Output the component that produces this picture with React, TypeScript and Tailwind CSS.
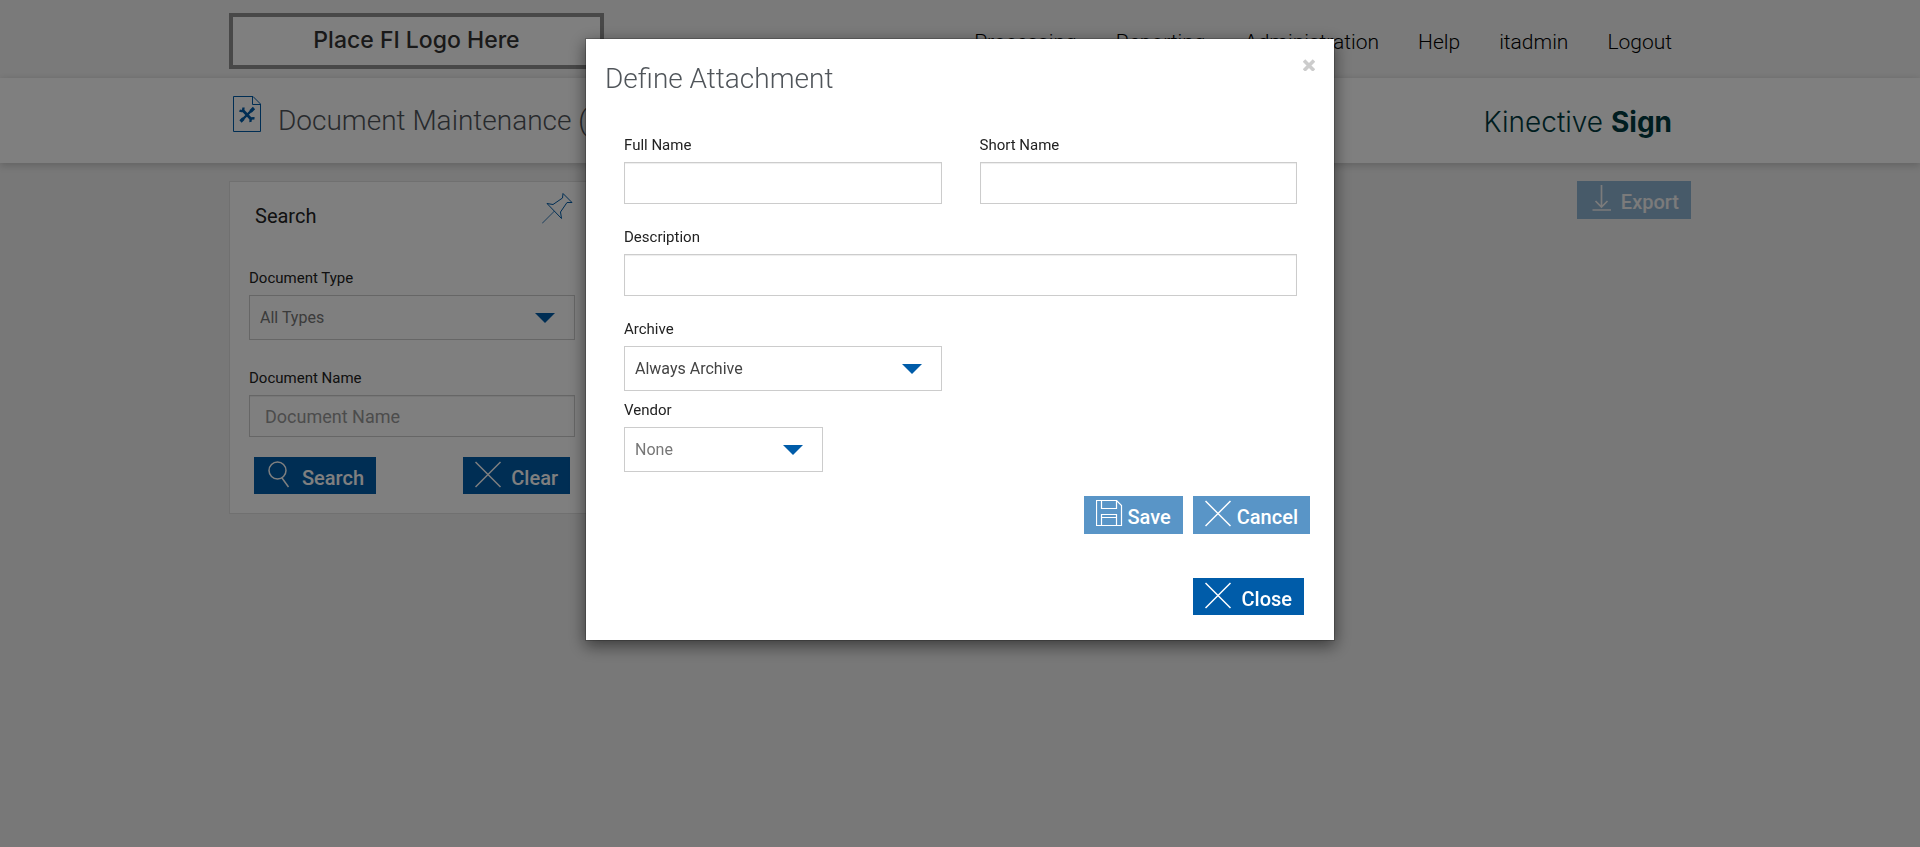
import type { ReactNode } from 'react';

const navItems = ['Processing', 'Reporting', 'Administration', 'Help', 'itadmin', 'Logout'];

function CrossIcon() {
  return (
    <svg className="h-7 w-7 shrink-0" viewBox="0 0 28 28" fill="none" stroke="currentColor" strokeWidth="1.5">
      <path d="M.5 1 25.5 26M25.5 1 .5 26" />
    </svg>
  );
}

function SearchIcon() {
  return (
    <svg className="h-7 w-7 shrink-0" viewBox="0 0 28 28" fill="none" stroke="currentColor" strokeWidth="1.5">
      <circle cx="11.5" cy="9.5" r="8.5" />
      <path d="M16 17 22.5 26" />
    </svg>
  );
}

function SaveIcon() {
  return (
    <svg className="h-7 w-7 shrink-0" viewBox="0 0 28 28" fill="none" stroke="currentColor" strokeWidth="1.2">
      <path d="M.5 .5H20.5L25.5 5.5V25.5H.5Z" />
      <path d="M5.5 .5V8.5H20.5V.5M5.5 25.5V14.5H20.5V25.5M5.5 17.5H20.5" />
    </svg>
  );
}

function ExportIcon() {
  return (
    <svg className="h-7 w-7 shrink-0" viewBox="0 0 28 28" fill="none" stroke="currentColor" strokeWidth="1.7">
      <path d="M12.5 0V22M6.5 16 12.5 22 18.5 16M3.5 25H22" />
    </svg>
  );
}

function DocumentToolsIcon() {
  return (
    <svg className="h-9 w-7 shrink-0" viewBox="0 0 28 36" fill="none" stroke="#005ca9">
      <path d="M.5.5H20L27.5 8V35.5H.5Z" />
      <path d="M19.5 .5V8.5H27.5" />
      <path d="M10 14.5 18.5 23.5" strokeWidth="2.8" />
      <path d="M9 24 18.5 14.5" strokeWidth="2.4" />
      <path d="M6.5 14.5Q10.5 16.5 10.5 11.5" strokeWidth="2.4" />
      <path d="M21.5 22.5Q17 21.5 17.5 26" strokeWidth="2.4" />
      <path d="M17.5 15.5 21 12M7.5 25.5 10.5 22.5" strokeWidth="3.2" />
    </svg>
  );
}

function PinIcon() {
  return (
    <svg className="h-8 w-8" viewBox="0 0 32 32" fill="none" stroke="#005ca9">
      <path d="M21 1.5 30 10.5 25 10.5 18.5 20 19.5 26.5 5 11.5 11 12.5 20.5 6Z" />
      <path d="M12.5 19 0 31.5" strokeWidth="0.8" />
    </svg>
  );
}

function Caret() {
  return (
    <svg
      className="pointer-events-none absolute top-[18px] right-5 h-2.5 w-5"
      viewBox="0 0 20 10"
      fill="#005ca9"
    >
      <path d="M0 0H20L10 10Z" />
    </svg>
  );
}

function Field({ id, label, className = '', children }: { id: string; label: string; className?: string; children: ReactNode }) {
  return (
    <div className={className}>
      <label htmlFor={id} className="mb-[7px] block text-[15px] leading-5 text-[#222]">
        {label}
      </label>
      {children}
    </div>
  );
}

function TextInput({ id, placeholder }: { id: string; placeholder?: string }) {
  return (
    <input
      id={id}
      type="text"
      placeholder={placeholder}
      className="block h-[42px] w-full border border-[#ccc] bg-white px-[15px] text-lg shadow-[inset_0_1px_1px_rgba(0,0,0,0.075)] placeholder:text-[#999]"
    />
  );
}

function SelectBox({ id, value, tone }: { id: string; value: string; tone: string }) {
  return (
    <div className="relative">
      <select
        id={id}
        defaultValue={value}
        className={`block h-[45px] w-full appearance-none border border-[#ccc] bg-white px-2.5 text-base ${tone}`}
      >
        <option>{value}</option>
      </select>
      <Caret />
    </div>
  );
}

function ActionButton({ icon, label, className = '', disabled = false }: { icon: ReactNode; label: string; className?: string; disabled?: boolean }) {
  return (
    <button
      type="button"
      disabled={disabled}
      className={`flex items-start bg-[#005ca9] px-3 pt-1 text-xl font-medium text-white ${className}`}
    >
      {icon}
      <span className="pt-[3px] leading-7">{label}</span>
    </button>
  );
}

export default function App() {
  return (
    <div className="min-h-screen bg-[#f0f0f0] font-[Roboto,sans-serif] text-[#222]">
      <header className="h-[78px] bg-[#f5f5f5]">
        <div className="mx-auto flex max-w-[1462px] items-start justify-between">
          <div className="mt-[13px] flex h-14 w-[375px] justify-center border-4 border-[#909090] bg-white font-[Inter,sans-serif] text-[23px] leading-[46px] font-medium text-[#333]">
            Place FI Logo Here
          </div>
          <nav className="flex gap-[39px] pt-7 pr-[19px]">
            {navItems.map((item) => (
              <a key={item} href="#" className="text-[21px] leading-7 font-light text-black">
                {item}
              </a>
            ))}
          </nav>
        </div>
      </header>

      <div className="h-[85px] bg-white shadow-[0_2px_8px_rgba(0,0,0,0.2)]">
        <div className="mx-auto flex max-w-[1462px] items-start justify-between px-1 pt-[18px]">
          <h1 className="flex items-start gap-[17px] text-[28px] leading-[50px] font-light text-[#50555a]">
            <DocumentToolsIcon />
            Document Maintenance (Define)
          </h1>
          <div className="pr-[15px] font-[Inter,sans-serif] text-[28px] leading-[52px] text-[#003b40]">
            <span className="font-light">Kinective</span> <span className="font-bold">Sign</span>
          </div>
        </div>
      </div>

      <main className="mx-auto flex max-w-[1462px] items-start justify-between pt-[18px]">
        <section className="w-[366px] border border-[#e0e0e0] bg-white px-[19px] pt-2.5 pb-[19px]">
          <div className="flex items-start justify-between pr-px pl-1.5">
            <h2 className="pt-3 text-xl leading-6">Search</h2>
            <button type="button" aria-label="Pin search panel">
              <PinIcon />
            </button>
          </div>
          <Field id="document-type" label="Document Type" className="mt-10">
            <SelectBox id="document-type" value="All Types" tone="text-[#777]" />
          </Field>
          <Field id="document-name" label="Document Name" className="mt-7">
            <TextInput id="document-name" placeholder="Document Name" />
          </Field>
          <div className="mt-5 flex justify-between px-[5px]">
            <ActionButton icon={<SearchIcon />} label="Search" className="h-[37px] gap-2" />
            <ActionButton icon={<CrossIcon />} label="Clear" className="h-[37px] gap-2" />
          </div>
        </section>
        <ActionButton icon={<ExportIcon />} label="Export" disabled className="h-[38px] gap-1 opacity-40" />
      </main>

      <div className="fixed inset-0 overflow-y-auto bg-black/50">
        <div
          role="dialog"
          aria-labelledby="dialog-title"
          className="mx-auto mt-[38px] w-full max-w-[750px] border border-black/20 bg-white bg-clip-padding px-[19px] pt-5 pb-[25px] shadow-[0_5px_15px_rgba(0,0,0,0.5)]"
        >
          <div className="flex items-start justify-between">
            <h2 id="dialog-title" className="text-[28px] leading-10 font-light text-[#50555a]">
              Define Attachment
            </h2>
            <button type="button" aria-label="Close dialog" className="text-[#ccc]">
              <svg className="h-3 w-3" viewBox="0 0 12 12" fill="none" stroke="currentColor" strokeWidth="3.6">
                <path d="M1 1.5 11 11.5M11 1.5 1 11.5" />
              </svg>
            </button>
          </div>

          <form className="pt-9 pr-[18px] pl-[19px]">
            <div className="grid grid-cols-2 gap-x-[38px] gap-y-[23px]">
              <Field id="full-name" label="Full Name">
                <TextInput id="full-name" />
              </Field>
              <Field id="short-name" label="Short Name">
                <TextInput id="short-name" />
              </Field>
              <Field id="description" label="Description" className="col-span-2">
                <TextInput id="description" />
              </Field>
              <Field id="archive" label="Archive">
                <SelectBox id="archive" value="Always Archive" tone="text-[#444]" />
              </Field>
            </div>
            <Field id="vendor" label="Vendor" className="mt-[9px] w-[199px]">
              <SelectBox id="vendor" value="None" tone="text-[#777]" />
            </Field>
          </form>

          <div className="mt-6 flex justify-end gap-2.5 pr-[5px]">
            <ActionButton icon={<SaveIcon />} label="Save" disabled className="h-[38px] gap-1 opacity-65" />
            <ActionButton icon={<CrossIcon />} label="Cancel" disabled className="h-[38px] gap-1 opacity-65" />
          </div>
          <div className="mt-11 flex justify-end pr-[11px]">
            <ActionButton icon={<CrossIcon />} label="Close" className="h-[37px] gap-2" />
          </div>
        </div>
      </div>
    </div>
  );
}
